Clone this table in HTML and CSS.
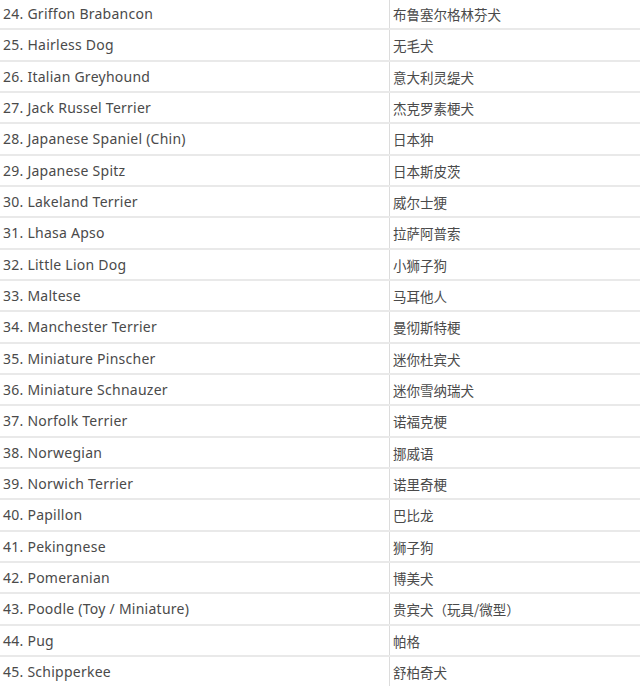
FILE: index.html
```html
<!DOCTYPE html>
<html lang="zh">
<head>
<meta charset="utf-8">
<link rel="stylesheet" href="styles.css">
</head>
<body>
<table class="breeds">
<tr><td class="en">24. Griffon Brabancon</td><td class="zh">布鲁塞尔格林芬犬</td></tr>
<tr><td class="en">25. Hairless Dog</td><td class="zh">无毛犬</td></tr>
<tr><td class="en">26. Italian Greyhound</td><td class="zh">意大利灵缇犬</td></tr>
<tr><td class="en">27. Jack Russel Terrier</td><td class="zh">杰克罗素梗犬</td></tr>
<tr><td class="en">28. Japanese Spaniel (Chin)</td><td class="zh">日本狆</td></tr>
<tr><td class="en">29. Japanese Spitz</td><td class="zh">日本斯皮茨</td></tr>
<tr><td class="en">30. Lakeland Terrier</td><td class="zh">威尔士㹴</td></tr>
<tr><td class="en">31. Lhasa Apso</td><td class="zh">拉萨阿普索</td></tr>
<tr><td class="en">32. Little Lion Dog</td><td class="zh">小狮子狗</td></tr>
<tr><td class="en">33. Maltese</td><td class="zh">马耳他人</td></tr>
<tr><td class="en">34. Manchester Terrier</td><td class="zh">曼彻斯特梗</td></tr>
<tr><td class="en">35. Miniature Pinscher</td><td class="zh">迷你杜宾犬</td></tr>
<tr><td class="en">36. Miniature Schnauzer</td><td class="zh">迷你雪纳瑞犬</td></tr>
<tr><td class="en">37. Norfolk Terrier</td><td class="zh">诺福克梗</td></tr>
<tr><td class="en">38. Norwegian</td><td class="zh">挪威语</td></tr>
<tr><td class="en">39. Norwich Terrier</td><td class="zh">诺里奇梗</td></tr>
<tr><td class="en">40. Papillon</td><td class="zh">巴比龙</td></tr>
<tr><td class="en">41. Pekingnese</td><td class="zh">狮子狗</td></tr>
<tr><td class="en">42. Pomeranian</td><td class="zh">博美犬</td></tr>
<tr><td class="en">43. Poodle (Toy / Miniature)</td><td class="zh">贵宾犬<span class="punct" lang="zh-TW">（</span>玩具/微型<span class="punct" lang="zh-TW">）</span></td></tr>
<tr><td class="en">44. Pug</td><td class="zh">帕格</td></tr>
<tr><td class="en">45. Schipperkee</td><td class="zh">舒柏奇犬</td></tr>
</table>
</body>
</html>
```
FILE: styles.css
```css
html, body {
  margin: 0;
  padding: 0;
  background: #fff;
  overflow: hidden;
}
.breeds {
  width: 640px;
  border-collapse: collapse;
  table-layout: fixed;
  margin-top: -1px;
  font-family: "Noto Sans", "Noto Sans CJK SC", sans-serif;
  font-size: 14px;
  color: #4a4a4a;
}
.breeds td {
  height: 28.333px;
  padding: 1px 0 0 3px;
  border-bottom: 2px solid #e9e9e9;
  vertical-align: middle;
  white-space: nowrap;
  line-height: 20px;
}
.breeds td.en {
  width: 386px;
  letter-spacing: 0.25px;
  border-right: 1px solid #dcdcdc;
}
.breeds td.zh {
  padding-left: 3px;
  font-family: "Noto Sans CJK SC", sans-serif;
  font-size: 13.5px;
}
.punct {
  font-family: "Noto Sans CJK TC", sans-serif;
}
```
